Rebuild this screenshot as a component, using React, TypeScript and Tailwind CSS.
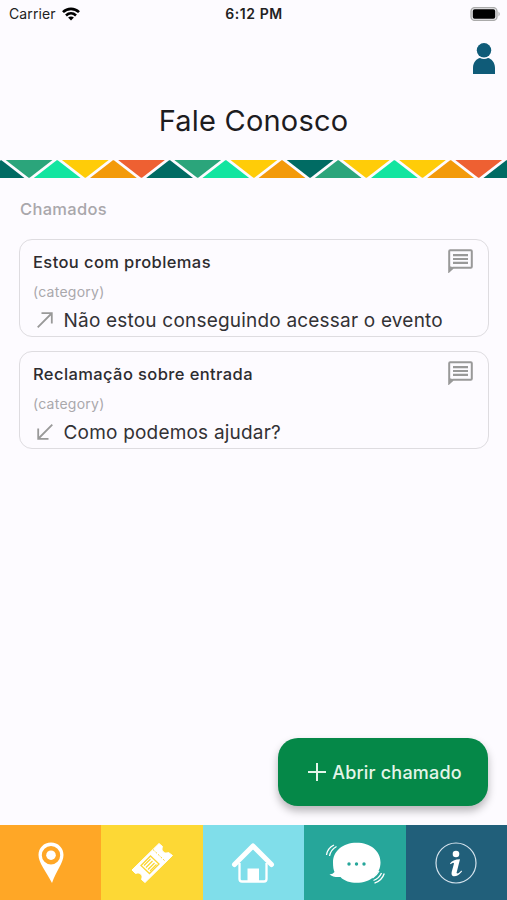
import React from "react";

const stripColors = [
  "#006b63", "#2ba57b", "#12e5a0", "#ffcc08", "#f39a0a", "#ee6032",
  "#006b63", "#2ba57b", "#12e5a0", "#ffcc08", "#f39a0a", "#006b63",
  "#2ba57b", "#ffcc08", "#12e5a0", "#ffcc08", "#f39a0a", "#ee6032", "#006b63",
];

function Strip() {
  return (
    <svg className="block h-[18px] w-full" viewBox="0 0 507 18">
      {stripColors.map((color, i) => {
        const c = 1 + i * 28.1;
        const points =
          i % 2 === 0
            ? `${c - 23.4},18 ${c - 0.5},0.3 ${c + 0.5},0.3 ${c + 23.4},18`
            : `${c - 23.4},0 ${c + 23.4},0 ${c + 0.5},17.7 ${c - 0.5},17.7`;
        return <polygon key={i} points={points} fill={color} />;
      })}
    </svg>
  );
}

function StatusBar() {
  return (
    <div className="grid h-7 grid-cols-3 items-center pl-[9px] pr-[6px] text-[14px] leading-none text-[#222]">
      <div className="flex items-center gap-[6px]">
        <span className="tracking-[0.1px]">Carrier</span>
        <svg className="h-[14px] w-[18px]" viewBox="0 0 18 14" fill="none" stroke="#000" strokeWidth="2.7">
          <path d="M1 5.1C5.5 .7 12.500 .7 17 5.100" />
          <path d="M4 8.400C7 5.700 11 5.700 14 8.400" />
          <path d="M6.100 10.600C7.600 9.100 10.400 9.100 11.900 10.600L9 13.600Z" fill="#000" stroke="none" />
        </svg>
      </div>
      <span className="whitespace-nowrap pr-[2px] text-center font-semibold tracking-[0.55px]">6:12 PM</span>
      <svg className="h-[14px] w-[31px] justify-self-end" viewBox="0 0 31 14">
        <rect x="1" y=".6" width="26" height="12.800" rx="3.600" fill="#e8e7ea" stroke="#aaa" strokeWidth="1.300" />
        <rect x="2.800" y="2.300" width="22.400" height="9.400" rx="1.800" fill="#000" />
        <path d="M28.500 4.500q2.500 2.500 0 5z" fill="#aaa" />
      </svg>
    </div>
  );
}

function MessageIcon() {
  return (
    <svg className="h-6 w-[25px]" viewBox="0 0 25 24" fill="none" stroke="#999">
      <path d="M1.200 2.200Q1.200 1.200 2.200 1.200H22.800Q23.800 1.200 23.800 2.200V17.800Q23.800 18.800 22.800 18.800H5L1.200 22.300Z" strokeWidth="2" />
      <path d="M1 17V23.200L6 18.500Z" fill="#999" stroke="none" />
      <path d="M5 6.200H20M5 10H20M5 13.800H20" strokeWidth="2.200" />
    </svg>
  );
}

function Card({ title, message, outgoing }: { title: string; message: string; outgoing?: boolean }) {
  return (
    <article className="flex h-[98px] flex-col rounded-[13px] border border-[#dedce0] pl-[13px] pr-[15px] pt-[8.5px]">
      <div className="flex items-start justify-between">
        <h2 className="pt-px text-[16.5px] font-medium leading-6 tracking-[0.4px] text-[#2d2c2f]">{title}</h2>
        <MessageIcon />
      </div>
      <p className="mt-2 text-[14px] leading-5 tracking-[0.25px] text-[#aaa8ac]">(category)</p>
      <div className="flex items-center gap-[10.5px] pl-1 pt-[6px]">
        <svg className="h-4 w-4" viewBox="0 0 16 16" fill="none" stroke="#999" strokeWidth="1.800">
          <path d={outgoing ? "M.7 15.300L14.500 1.500M4.500 1.200H14.800V11.500" : "M15.300 .7L1.500 14.500M1.200 4.500V14.800H11.500"} />
        </svg>
        <p className="pt-px text-[19px] leading-6 tracking-[0.2px] text-[#333235]">{message}</p>
      </div>
    </article>
  );
}

function PinIcon() {
  return (
    <svg className="h-[42px] w-[26px]" viewBox="0 0 26 42">
      <path fillRule="evenodd" fill="#fff" d="M13 .5C5.800 .5 .5 6 .5 13C.5 21 8 29 14 41C18 29 25.500 21 25.500 13C25.500 6 20.200 .5 13 .5ZM13 4A9.200 9.200 0 1 0 13 22.400A9.200 9.200 0 1 0 13 4Z" />
      <circle cx="13" cy="13.200" r="4.800" fill="#fff" />
    </svg>
  );
}

function TicketIcon() {
  return (
    <svg className="h-[42px] w-[42px]" viewBox="0 0 42 42">
      <path fill="#fff" stroke="#fff" strokeWidth="1" strokeLinejoin="round" d="M28 1.500L31.500 4.500C29.500 8.500 33.500 12.500 37.500 10.500L41.500 13.500L14 40.500L10.500 37.500C12.500 33.500 9 29.500 4.500 31.500L1 28Z" />
      <g stroke="#fbd633" fill="none">
        <path d="M22 7.500L34.500 19.500" strokeWidth="1" strokeDasharray="2 1.500" />
        <path d="M19.500 14L28 22L18.500 31.500L10 23.500Z" strokeWidth="1.300" />
        <path d="M19.500 17L13 23.500M21.500 19L15 25.500M23.500 21L17 27.500M25.500 22.500L19 29" strokeWidth="1.200" />
      </g>
    </svg>
  );
}

function HomeIcon() {
  return (
    <svg className="h-[42px] w-[44px]" viewBox="0 0 44 42" fill="none" stroke="#fff">
      <path d="M3.500 22.500L22 4L40.500 22.500" strokeWidth="5" strokeLinecap="round" strokeLinejoin="round" />
      <path d="M8.500 21V37Q8.500 39.500 11 39.500H33Q35.500 39.500 35.500 37V21" strokeWidth="2.300" />
      <path d="M16.500 40V26.500H28V40Z" fill="#fff" stroke="none" />
    </svg>
  );
}

function ChatIcon() {
  return (
    <svg className="h-[42px] w-[60px]" viewBox="0 0 60 42" fill="none">
      <path fill="#fff" d="M31.500 .8C18 .8 8 9 8 20.500C8 25 8.500 28 9.500 30Q8 32 4.500 32.500Q8 35.500 15.500 35C19 39 25.500 40.800 31.500 40.800C45.500 40.800 55.500 32 55.500 20.500S45.500 .8 31.500 .8Z" />
      <g fill="#26a69a"><circle cx="24" cy="22" r="1.700" /><circle cx="31.500" cy="22" r="1.700" /><circle cx="39" cy="22" r="1.700" /></g>
      <path stroke="#fff" strokeWidth="1.300" d="M1.500 13Q2.500 6 9 3M4.500 14Q5.500 8 11.500 4.500M48.500 38.500Q54 36.500 56.500 31M49.500 41.200Q57 38.500 59.300 31.500M47.500 36Q51.500 33.500 54 29" />
    </svg>
  );
}

function InfoIcon() {
  return (
    <svg className="h-[42px] w-[42px]" viewBox="0 0 42 42">
      <circle cx="21" cy="21" r="20" fill="none" stroke="#d5e3ed" strokeWidth="1.200" />
      <circle cx="21" cy="12" r="3.300" fill="#fff" />
      <path fill="#fff" d="M15 21.500Q17.500 17.500 25 17.300L21.500 31Q23 32.500 26.500 28.500L27 29.500Q22.500 34.800 18.500 34.300Q15.800 33.500 16.800 29.500L19 21.500Q18.500 19.500 15.500 22.200Z" />
    </svg>
  );
}

export default function App() {
  return (
    <div className="flex h-[900px] w-[507px] flex-col overflow-hidden bg-[#fdfbff] font-['Inter',sans-serif]">
      <StatusBar />
      <header className="flex h-[132px] flex-col">
        <div className="flex justify-end pr-3 pt-[15px]">
          <svg className="h-8 w-[22px]" viewBox="0 0 22 32" fill="#0f5b78">
            <circle cx="11" cy="7.300" r="7.200" />
            <path d="M0 31V25C0 19 4 15.500 7 15Q11 17 15 15C18 15.500 22 19 22 25V31Z" />
          </svg>
        </div>
        <h1 className="mt-[28px] text-center text-[29px] leading-9 tracking-[0.2px] text-[#1d1c1f]">Fale Conosco</h1>
      </header>
      <Strip />
      <main className="flex flex-1 flex-col pl-[19px] pr-[18px] pt-[19px]">
        <p className="pl-px text-[16.5px] font-medium leading-6 tracking-[0.3px] text-[#a9a7ab]">Chamados</p>
        <div className="mt-[18px] flex flex-col gap-[14px]">
          <Card title="Estou com problemas" message="Não estou conseguindo acessar o evento" outgoing />
          <Card title="Reclamação sobre entrada" message="Como podemos ajudar?" />
        </div>
        <button className="mb-[19px] mr-px mt-auto flex h-[68px] w-[210px] items-center justify-center gap-[6px] self-end rounded-[20px] bg-[#058848] pl-1 text-[18px] font-medium text-[#e4f5e9] shadow-[0_5px_8px_rgba(0,0,0,0.28)]">
          <svg className="h-[18px] w-[18px]" viewBox="0 0 18 18" stroke="currentColor" strokeWidth="2">
            <path d="M9 0V18M0 9H18" />
          </svg>
          <span className="tracking-[0.2px]">Abrir chamado</span>
        </button>
      </main>
      <nav className="grid h-[75px] grid-cols-5">
        <div className="flex items-center justify-center bg-[#ffa726]"><PinIcon /></div>
        <div className="flex items-center justify-center bg-[#fdd835]"><TicketIcon /></div>
        <div className="flex items-center justify-center bg-[#80deea]"><HomeIcon /></div>
        <div className="flex items-center justify-center bg-[#26a69a]"><ChatIcon /></div>
        <div className="flex items-center justify-center bg-[#215f7a]"><InfoIcon /></div>
      </nav>
    </div>
  );
}
